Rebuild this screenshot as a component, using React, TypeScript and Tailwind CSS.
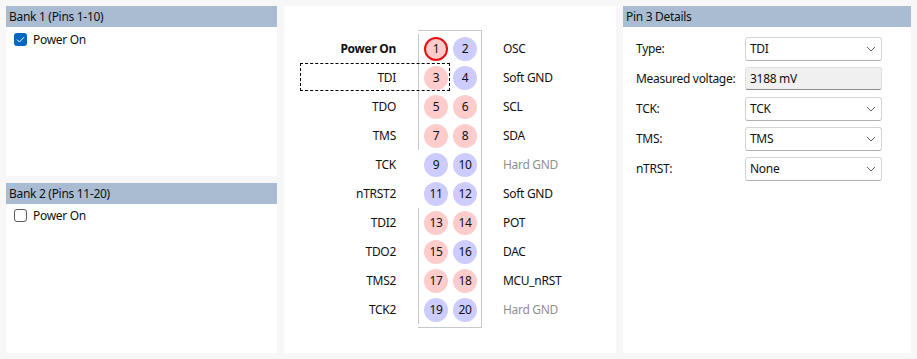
import React from "react";

const F = { fontFamily: '"Segoe UI", "Noto Sans", "Open Sans", sans-serif' };

type Pin = { n: number; red: boolean };
const rows: { left: string; right: string; bold?: boolean; gray?: boolean; a: Pin; b: Pin }[] = [
  { left: "Power On", bold: true, right: "OSC", a: { n: 1, red: true }, b: { n: 2, red: false } },
  { left: "TDI", right: "Soft GND", a: { n: 3, red: true }, b: { n: 4, red: false } },
  { left: "TDO", right: "SCL", a: { n: 5, red: true }, b: { n: 6, red: true } },
  { left: "TMS", right: "SDA", a: { n: 7, red: true }, b: { n: 8, red: true } },
  { left: "TCK", right: "Hard GND", gray: true, a: { n: 9, red: false }, b: { n: 10, red: false } },
  { left: "nTRST2", right: "Soft GND", a: { n: 11, red: false }, b: { n: 12, red: false } },
  { left: "TDI2", right: "POT", a: { n: 13, red: true }, b: { n: 14, red: true } },
  { left: "TDO2", right: "DAC", a: { n: 15, red: true }, b: { n: 16, red: false } },
  { left: "TMS2", right: "MCU_nRST", a: { n: 17, red: true }, b: { n: 18, red: true } },
  { left: "TCK2", right: "Hard GND", gray: true, a: { n: 19, red: false }, b: { n: 20, red: false } },
];

function PinDot({ p }: { p: Pin }) {
  const sel = p.n === 1;
  return (
    <div
      className={
        "w-[24px] h-[24px] rounded-full flex items-center justify-center text-[12px] text-[#111] " +
        (p.red ? "bg-[#ffcccc] " : "bg-[#ccccff] ") +
        (sel ? "border-2 border-[#e81010]" : "")
      }
    >
      {p.n}
    </div>
  );
}

function Chevron() {
  return (
    <svg width="10" height="6" viewBox="0 0 10 6" className="mr-[5px]">
      <path d="M1 1 L5 5 L9 1" fill="none" stroke="#606060" strokeWidth="1" />
    </svg>
  );
}

function Select({ value }: { value: string }) {
  return (
    <div className="w-[137px] h-[24px] bg-white border border-[#d5d5d5] border-b-[#b0b0b0] rounded-[3px] flex items-center justify-between pl-[4px] text-[12px] text-[#111]">
      <span>{value}</span>
      <Chevron />
    </div>
  );
}

function Header({ children }: { children: React.ReactNode }) {
  return (
    <div className="h-[21px] bg-[#aabcd2] flex items-center pl-[3px] text-[12px] text-[#111]">{children}</div>
  );
}

export default function App() {
  return (
    <div style={F} className="w-[917px] h-[359px] bg-[#f7f7f7] p-[6px] flex gap-[7px] text-[12px] tracking-[-0.3px] text-[#111]">
      {/* Left column */}
      <div className="w-[271px] flex flex-col gap-[7px]">
        <div className="h-[170px] bg-white flex flex-col">
          <Header>Bank 1 (Pins 1-10)</Header>
          <div className="flex items-center gap-[6px] pl-[8px] pt-[6px]">
            <div className="w-[13px] h-[13px] rounded-[3px] bg-[#0067c0] flex items-center justify-center">
              <svg width="9" height="7" viewBox="0 0 9 7">
                <path d="M1 3.6 L3.4 6 L8 1.2" fill="none" stroke="white" strokeWidth="1" />
              </svg>
            </div>
            <span className="leading-[13px]">Power On</span>
          </div>
        </div>
        <div className="flex-1 bg-white flex flex-col">
          <Header>Bank 2 (Pins 11-20)</Header>
          <div className="flex items-center gap-[6px] pl-[8px] pt-[5px]">
            <div className="w-[13px] h-[13px] rounded-[3px] border border-[#5a5a5a] bg-white" />
            <span className="leading-[13px]">Power On</span>
          </div>
        </div>
      </div>

      {/* Middle */}
      <div className="w-[332px] bg-white pt-[24px] pl-[16px]">
        <div className="relative flex">
          <div className="absolute left-0 top-[33px] w-[150px] h-[28px] border border-dashed border-black" />
          <div className="w-[96px] flex flex-col pt-[4px]">
            {rows.map((r) => (
              <div
                key={r.left}
                className={"h-[29px] flex items-center justify-end " + (r.bold ? "font-bold" : "")}
              >
                {r.left}
              </div>
            ))}
          </div>
          <div className="ml-[22px] w-[64px] border-t border-r border-b border-[#c8c8c8] flex flex-col pt-[3px] pb-[3px]">
            {rows.map((r, i) => (
              <div
                key={i}
                className={
                  "h-[29px] flex items-center pl-[5px] gap-[5px] " +
                  (i === 4 || i === 5 ? "border-l border-transparent" : "border-l border-[#c8c8c8]")
                }
              >
                <PinDot p={r.a} />
                <PinDot p={r.b} />
              </div>
            ))}
          </div>
          <div className="ml-[21px] flex flex-col pt-[4px]">
            {rows.map((r, i) => (
              <div key={i} className={"h-[29px] flex items-center " + (r.gray ? "text-[#8f8f8f]" : "")}>
                {r.right}
              </div>
            ))}
          </div>
        </div>
      </div>

      {/* Right */}
      <div className="w-[288px] bg-white flex flex-col">
        <Header>Pin 3 Details</Header>
        <div className="grid grid-cols-[109px_137px] gap-y-[6px] pl-[13px] pt-[10px]">
          <div className="h-[24px] flex items-center">Type:</div>
          <Select value="TDI" />
          <div className="h-[24px] flex items-center">Measured voltage:</div>
          <div className="h-[23px] bg-[#f0f0f0] border border-[#e0e0e0] border-b-[#8a8a8a] rounded-[3px] flex items-center pl-[4px]">
            3188 mV
          </div>
          <div className="h-[24px] flex items-center">TCK:</div>
          <Select value="TCK" />
          <div className="h-[24px] flex items-center">TMS:</div>
          <Select value="TMS" />
          <div className="h-[24px] flex items-center">nTRST:</div>
          <Select value="None" />
        </div>
      </div>
    </div>
  );
}
